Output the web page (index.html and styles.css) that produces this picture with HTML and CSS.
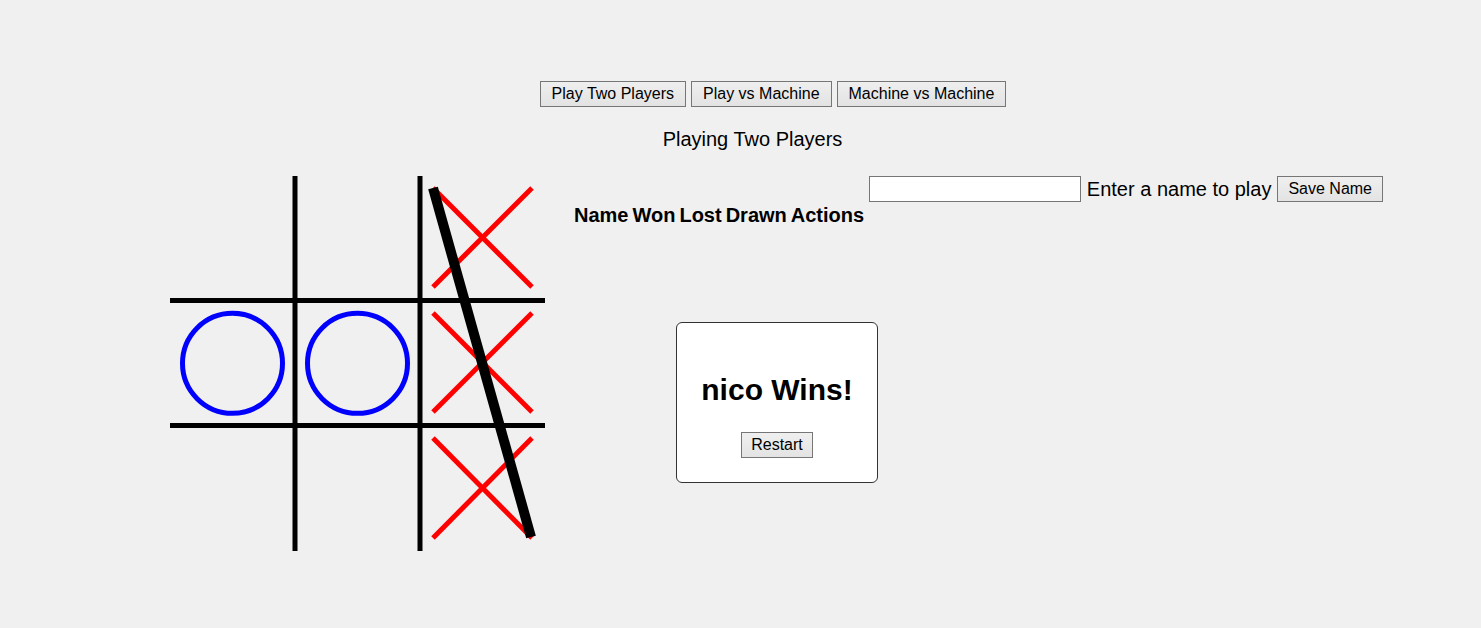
FILE: index.html
```html
<!DOCTYPE html>
<html>
<head>
<meta charset="utf-8">
<link rel="stylesheet" href="styles.css">
</head>
<body>
<div class="modes">
  <button class="btn">Play Two Players</button>
  <button class="btn">Play vs Machine</button>
  <button class="btn">Machine vs Machine</button>
</div>
<div class="status">Playing Two Players</div>
<div class="main">
  <svg class="board" width="375" height="375" viewBox="0 0 375 375">
    <g stroke="#000" stroke-width="5">
      <line x1="125" y1="0" x2="125" y2="375"/>
      <line x1="250" y1="0" x2="250" y2="375"/>
      <line x1="0" y1="124.5" x2="375" y2="124.5"/>
      <line x1="0" y1="249.5" x2="375" y2="249.5"/>
    </g>
    <g fill="none" stroke="#0000ff" stroke-width="5">
      <circle cx="62.5" cy="187.3" r="50"/>
      <circle cx="187.5" cy="187.3" r="50"/>
    </g>
    <g stroke="#ff0000" stroke-width="5">
      <line x1="263" y1="12" x2="362" y2="111"/>
      <line x1="362" y1="12" x2="263" y2="111"/>
      <line x1="263" y1="137" x2="362" y2="236"/>
      <line x1="362" y1="137" x2="263" y2="236"/>
      <line x1="263" y1="262" x2="362" y2="362"/>
      <line x1="362" y1="262" x2="263" y2="362"/>
    </g>
    <line x1="263" y1="12" x2="361" y2="361" stroke="#000" stroke-width="10"/>
  </svg>
  <div class="side">
    <div class="name-form">
      <input class="name-input" type="text">
      <span class="hint">Enter a name to play</span>
      <button class="btn btn-save">Save Name</button>
    </div>
    <table class="scores">
      <thead>
        <tr><th>Name</th><th>Won</th><th>Lost</th><th>Drawn</th><th>Actions</th></tr>
      </thead>
    </table>
  </div>
  <div class="result">
    <h2 class="result-title">nico Wins!</h2>
    <button class="btn">Restart</button>
  </div>
</div>
</body>
</html>
```
FILE: styles.css
```css
html, body {
  margin: 0;
  padding: 0;
  background: #f0f0f0;
  font-family: "Liberation Sans", Arial, sans-serif;
  color: #000;
}
.btn {
  font-family: "Liberation Sans", Arial, sans-serif;
  font-size: 16px;
  line-height: 18px;
  padding: 3px 9px;
  border: 1px solid #767676;
  background: linear-gradient(#efefef, #e3e3e3);
  color: #000;
  border-radius: 0;
  margin: 0;
}
.btn-save {
  padding: 3px 10px;
}
.modes {
  padding-top: 81px;
  padding-left: 65px;
  display: flex;
  justify-content: center;
  gap: 5px;
}
.modes .btn {
  padding: 3px 11px;
}
.status {
  text-align: center;
  font-size: 20px;
  line-height: 24px;
  margin-top: 20px;
  padding-left: 24px;
}
.main {
  position: relative;
  display: flex;
  align-items: flex-start;
  margin-top: 25px;
  padding-left: 170px;
}
.board {
  display: block;
  flex: none;
}
.side {
  width: 809px;
  margin-left: 29px;
  display: flex;
  flex-direction: column;
  align-items: flex-start;
}
.name-form {
  align-self: stretch;
  display: flex;
  align-items: center;
  justify-content: flex-end;
}
.name-input {
  box-sizing: border-box;
  width: 212px;
  height: 26px;
  padding: 1px 2px;
  border: 1px solid #767676;
  background: #fff;
  margin: 0 6px 0 0;
}
.hint {
  font-size: 20px;
  line-height: 23px;
  margin-right: 6px;
}
.scores {
  border-collapse: separate;
  border-spacing: 0;
  margin: 2px 0 0;
}
.scores th {
  font-size: 20px;
  line-height: 23px;
  font-weight: bold;
  padding: 0 4px 0 0;
  text-align: left;
}
.result {
  position: absolute;
  left: 676px;
  top: 146px;
  width: 200px;
  padding: 50px 0 24px;
  background: #fff;
  border: 1px solid #333;
  border-radius: 6px;
  display: flex;
  flex-direction: column;
  align-items: center;
}
.result-title {
  font-size: 30px;
  line-height: 34px;
  margin: 0 0 25px;
}
```
